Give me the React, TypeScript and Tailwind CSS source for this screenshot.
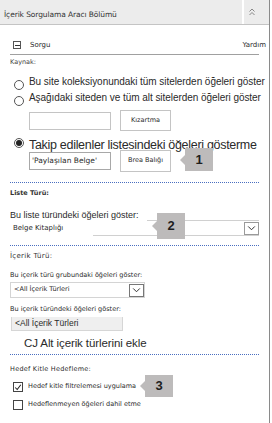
import React from "react";

const Callout = ({ n, className }: { n: string; className: string }) => (
  <div className={`absolute flex items-center ${className}`}>
    <div className="h-0 w-0 border-y-[5px] border-r-[5px] border-y-transparent border-r-[#bdbbbb]" />
    <div className="flex h-full w-[28px] items-center justify-center bg-[#bdbbbb] font-['Liberation_Sans',sans-serif] text-[13px] font-bold text-[#1e1e1e]">
      {n}
    </div>
  </div>
);

const Radio = ({ checked }: { checked?: boolean }) => (
  <span className="flex h-[10px] w-[10px] shrink-0 items-center justify-center rounded-full border border-[#555] bg-white">
    {checked && <span className="h-[6px] w-[6px] rounded-full bg-[#222]" />}
  </span>
);

const Check = ({ checked }: { checked?: boolean }) => (
  <span className="flex h-[10px] w-[10px] shrink-0 items-center justify-center border border-[#444] bg-white">
    {checked && (
      <svg viewBox="0 0 10 10" className="h-[9px] w-[9px]">
        <path d="M1.5 5 L4 7.5 L8.5 1.5" fill="none" stroke="#222" strokeWidth="1.3" />
      </svg>
    )}
  </span>
);

const Chevron = () => (
  <svg viewBox="0 0 10 6" className="h-[5px] w-[9px]">
    <path d="M1 0.5 L5 4.5 L9 0.5" fill="none" stroke="#333" strokeWidth="1.2" />
  </svg>
);

const Dotted = ({ className }: { className: string }) => (
  <div className={`mr-[10px] border-b border-dotted border-[#4a6fc0] ${className}`} />
);

const small = "font-['DejaVu_Sans',sans-serif]";

export default function App() {
  return (
    <div className="relative h-[423px] w-[270px] border-r border-[#8a8a8a] bg-white font-['Liberation_Sans',Arial,sans-serif] text-[#2a2a2a]">
      {/* header */}
      <div className="flex h-[25px] border-b border-[#c4c4c4] bg-[#ececec]">
        <div className={`flex flex-1 items-center pl-[4px] pt-[6px] text-[7.5px] tracking-[-0.1px] text-[#333] ${small}`}>
          İçerik Sorgulama Aracı Bölümü
        </div>
        <div className="w-[2px] bg-white" />
        <div className="flex w-[25px] items-center justify-center pb-[1px] pr-[10px]">
          <svg viewBox="0 0 8 8" className="h-[8px] w-[8px]">
            <path d="M1.5 3.5 L4 1 L6.5 3.5 M1.5 7 L4 4.5 L6.5 7" fill="none" stroke="#888" strokeWidth="1" />
          </svg>
        </div>
      </div>

      <div className="pl-[10px]">
        {/* Sorgu */}
        <div className={`mt-[15px] flex h-[10px] items-center pr-[3px] text-[7px] ${small}`}>
          <span className="ml-[3px] flex h-[8px] w-[8px] items-center justify-center border border-[#555]">
            <span className="h-px w-[5px] bg-[#333]" />
          </span>
          <span className="ml-[9px] flex-1">Sorgu</span>
          <span>Yardım</span>
        </div>
        <div className="mr-[10px] mt-[4px] h-px bg-[#a0a0a0]" />

        <div className={`mt-[3px] h-[8px] text-[6.5px] leading-[8px] text-[#444] ${small}`}>Kaynak:</div>

        {/* kaynak radios */}
        <div className="mt-[13px] flex h-[12px] items-center gap-[5px] pl-[4px] text-[10px] leading-[12px] tracking-[-0.05px]">
          <Radio />
          <span className="relative -top-[3px]">Bu site koleksiyonundaki tüm sitelerden öğeleri göster</span>
        </div>
        <div className="mt-[4px] flex h-[12px] items-center gap-[5px] pl-[4px] text-[10px] leading-[12px] tracking-[-0.05px]">
          <Radio />
          <span className="relative -top-[3px]">Aşağıdaki siteden ve tüm alt sitelerden öğeleri göster</span>
        </div>
        <div className="ml-[19px] mt-[3px] flex h-[21px] items-center gap-[9px]">
          <div className="h-[18px] w-[82px] border border-[#c4c4c4]" />
          <div className={`flex h-[21px] w-[51px] items-center justify-center border border-[#c4c4c4] text-[6.5px] ${small}`}>
            Kızartma
          </div>
        </div>

        <div className="mt-[5px] flex h-[14px] items-center gap-[5px] pl-[4px] text-[12.5px] leading-[14px] tracking-[-0.3px]">
          <Radio checked />
          <span className="relative top-[2px]">Takip edilenler listesindeki öğeleri gösterme</span>
        </div>
        <div className="relative ml-[19px] flex h-[22px] items-center gap-[9px]">
          <div className={`flex h-[18px] w-[82px] items-center border border-[#a8a8a8] pl-[2px] text-[7.5px] ${small}`}>
            'Paylaşılan Belge'
          </div>
          <div className={`flex h-[22px] w-[51px] items-center justify-center border border-[#c4c4c4] text-[6.5px] ${small}`}>
            Brea Balığı
          </div>
          <Callout n="1" className="left-[151px] top-[-2px] h-[23px]" />
        </div>

        <Dotted className="mt-[10px]" />
        <div className={`mt-[6px] h-[8px] text-[6.5px] font-bold leading-[8px] text-[#333] ${small}`}>Liste Türü:</div>

        {/* liste türü */}
        <div className="mt-[13px] h-[10px] text-[9px] leading-[10px]">Bu liste türündeki öğeleri göster:</div>
        <div className="relative mr-[10px] flex h-[16px] items-center">
          <span className={`flex-1 pl-[3px] text-[7px] ${small}`}>Belge Kitaplığı</span>
          <div className="absolute left-[137px] right-0 top-0 border-t border-[#d0d0d0]" />
          <div className="absolute bottom-0 left-[83px] right-0 border-b border-[#d0d0d0]" />
          <div className="flex h-[13px] w-[15px] items-center justify-center border border-[#9a9a9a] bg-white">
            <Chevron />
          </div>
          <Callout n="2" className="left-[142px] top-[-7px] h-[26px]" />
        </div>

        <Dotted className="mt-[9px]" />
        <div className={`mt-[6px] h-[9px] text-[7px] leading-[9px] tracking-[0.3px] text-[#333] ${small}`}>İçerik Türü:</div>

        {/* içerik türü */}
        <div className={`mt-[10px] h-[8px] text-[6.5px] leading-[8px] ${small}`}>Bu içerik türü grubundaki öğeleri göster:</div>
        <div className="mt-[3px] flex h-[16px] w-[135px] items-center border border-[#d4d4d4]">
          <span className={`flex-1 pl-[3px] text-[6.5px] ${small}`}>&lt;All İçerik Türleri</span>
          <div className="flex h-[13px] w-[15px] items-center justify-center border border-[#777]">
            <Chevron />
          </div>
        </div>
        <div className={`mt-[7px] h-[8px] text-[6.5px] leading-[8px] ${small}`}>Bu içerik türündeki öğeleri göster:</div>
        <div className="ml-px mt-[4px] flex h-[14px] w-[112px] items-center border-b border-l border-r border-[#d6d6d6] bg-[#efefef] pl-[3px] text-[8.5px]">
          &lt;All İçerik Türleri
        </div>
        <div className="ml-[14px] mt-[5px] h-[14px] text-[11.5px] leading-[14px] tracking-[-0.1px]">CJ Alt içerik türlerini ekle</div>

        <Dotted className="mt-[4px]" />
        <div className={`mt-[10px] h-[9px] text-[6.5px] leading-[9px] tracking-[0.25px] ${small}`}>Hedef Kitle Hedefleme:</div>

        {/* hedef kitle */}
        <div className={`relative mt-[8px] flex flex-col gap-[8px] pl-[3px] text-[6.5px] ${small}`}>
          <div className="flex h-[10px] items-center gap-[5px]">
            <Check checked />
            <span>Hedef kitle filtrelemesi uygulama</span>
          </div>
          <div className="flex h-[10px] items-center gap-[5px]">
            <Check />
            <span>Hedeflenmeyen öğeleri dahil etme</span>
          </div>
          <Callout n="3" className="left-[130px] top-[-7px] h-[22px]" />
        </div>
      </div>
    </div>
  );
}
